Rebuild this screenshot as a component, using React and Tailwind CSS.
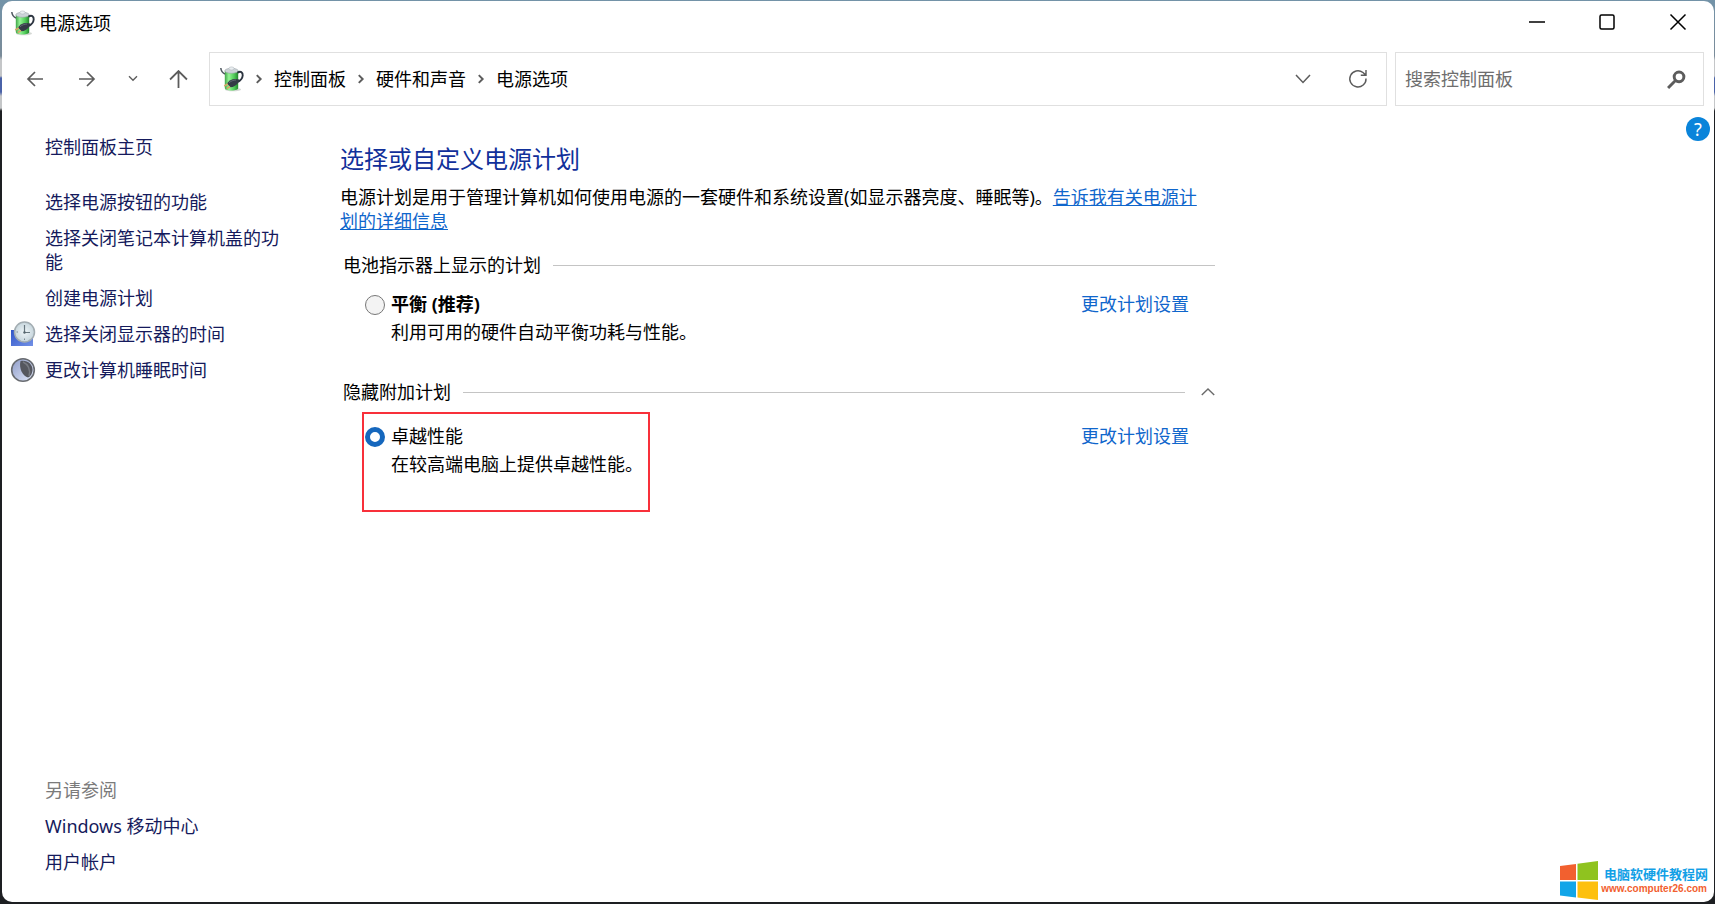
import React, { useState } from 'react';

const sideLinks = [
  { label: '选择电源按钮的功能' },
  { label: '选择关闭笔记本计算机盖的功能' },
  { label: '创建电源计划' },
  { label: '选择关闭显示器的时间', icon: ClockIcon },
  { label: '更改计算机睡眠时间', icon: MoonIcon },
];

const crumbs = ['控制面板', '硬件和声音', '电源选项'];

function BatteryIcon() {
  return (
    <svg width="24" height="26" viewBox="0 0 24 26" aria-hidden="true">
      <defs>
        <linearGradient id="cell" x1="0" x2="1" y1="0" y2="0">
          <stop offset="0" stopColor="#3fa548" />
          <stop offset="0.3" stopColor="#96f596" />
          <stop offset="0.7" stopColor="#4fcb57" />
          <stop offset="1" stopColor="#25852f" />
        </linearGradient>
      </defs>
      <ellipse cx="13" cy="23.500" rx="8" ry="1.800" fill="#d4d8d4" />
      <path d="M4.800 5v17c0 1.500 2.500 2.500 6.700 2.500s6.700-1 6.700-2.500V5z" fill="url(#cell)" />
      <ellipse cx="11.500" cy="4.800" rx="6.700" ry="2.500" fill="#cdd3d8" stroke="#9aa3a8" strokeWidth="0.600" />
      <ellipse cx="11.500" cy="2.500" rx="2.600" ry="1.600" fill="#e9edf0" stroke="#a9b0b5" strokeWidth="0.500" />
      <path d="M0.800 2c0.300 3.500 1.800 5 4.200 6" fill="none" stroke="#4d565e" strokeWidth="1.500" />
      <path d="M17.500 6.800c3-2.300 5.500-0.500 5.200 2.700-0.300 3-2 5-4.700 6.500" fill="none" stroke="#2c3440" strokeWidth="1.900" />
      <path d="M7 17.500c1.500-2.500 5-4.500 8-4.500l4.500.5-1.500 3.500c-2 2.500-4.500 4.300-7.500 4.300z" fill="#343a46" />
      <path d="M9 16.800c2-1.800 4.500-2.800 7-2.800" fill="none" stroke="#6d7482" strokeWidth="0.800" />
      <path d="M7.800 18l-3.600 2M10 20.500l-3.200 2" stroke="#d9a566" strokeWidth="1.500" />
    </svg>
  );
}

function ClockIcon() {
  return (
    <svg width="26" height="26" viewBox="0 0 26 26" aria-hidden="true">
      <defs>
        <linearGradient id="screen" x1="0" x2="1" y1="0" y2="1">
          <stop offset="0" stopColor="#2f55c8" />
          <stop offset="1" stopColor="#7391e6" />
        </linearGradient>
        <radialGradient id="dial">
          <stop offset="0" stopColor="#eef5f8" />
          <stop offset="1" stopColor="#c6d5dc" />
        </radialGradient>
      </defs>
      <path d="M1 9h22v16H1z" fill="url(#screen)" />
      <circle cx="14.500" cy="11" r="10" fill="url(#dial)" stroke="#a3adb2" strokeWidth="1.500" />
      <path d="M14.500 4v7.500H20" fill="none" stroke="#66767e" strokeWidth="1.200" />
      <path d="M14.500 17.500v1.500M6.500 11H8" stroke="#7d8b92" strokeWidth="1" />
      <circle cx="14.500" cy="11.500" r="1.200" fill="#56666e" />
    </svg>
  );
}

function MoonIcon() {
  return (
    <svg width="26" height="26" viewBox="0 0 26 26" aria-hidden="true">
      <defs>
        <linearGradient id="moon" x1="0" x2="1" y1="0" y2="1">
          <stop offset="0" stopColor="#8f9cc8" />
          <stop offset="1" stopColor="#e2e9fb" />
        </linearGradient>
      </defs>
      <circle cx="13" cy="13" r="11.300" fill="url(#moon)" stroke="#686b70" strokeWidth="1.600" />
      <path d="M10.500 4c6.500-1.500 12 3 12 8.500 0 4-2 7-4.500 8-5-1-9.500-9-7.500-16.500z" fill="#55575f" />
      <path d="M13 5c5 2 8 8 6 14" fill="none" stroke="#777a82" strokeWidth="1.500" />
    </svg>
  );
}

function Icon({ d, size = 18, width = 1.5 }) {
  return (
    <svg width={size} height={size} viewBox="0 0 18 18" fill="none" stroke="currentColor" strokeWidth={width} aria-hidden="true">
      <path d={d} />
    </svg>
  );
}

function TitleBar() {
  return (
    <header className="flex h-[51px] items-start justify-between pt-px pl-[9px]">
      <div className="flex items-center gap-1 pt-2">
        <BatteryIcon />
        <span>电源选项</span>
      </div>
      <div className="flex h-10 text-black">
        <button aria-label="最小化" className="flex w-[70px] items-center justify-center">
          <Icon d="M1 9h16" />
        </button>
        <button aria-label="最大化" className="flex w-[70px] items-center justify-center">
          <svg width="18" height="18" viewBox="0 0 18 18" fill="none" stroke="currentColor" strokeWidth="1.5" aria-hidden="true">
            <rect x="2" y="2" width="14" height="14" rx="1.500" />
          </svg>
        </button>
        <button aria-label="关闭" className="flex w-[72px] items-center justify-center">
          <Icon d="M1.500 1.500l15 15M16.500 1.500l-15 15" />
        </button>
      </div>
    </header>
  );
}

function NavBar() {
  return (
    <div className="flex h-[54px] items-stretch pr-[10px] text-[#5c5c5c]">
      <nav className="flex w-[207px] shrink-0 items-center pl-6">
        <button aria-label="后退" className="mr-[34px]"><Icon d="M17 9H1.500M9 2L2 9l7 7" width={1.700} /></button>
        <button aria-label="前进" className="mr-[31px]"><Icon d="M1 9h15.500M9 2l7 7-7 7" width={1.700} /></button>
        <button aria-label="最近位置" className="mr-[30px]"><Icon size={12} width={2} d="M3 5l6 6 6-6" /></button>
        <button aria-label="上移"><Icon size={19} d="M9 17V1.500M1 9l8-8 8 8" width={1.700} /></button>
      </nav>
      <div className="mr-2 flex flex-1 items-center border border-[#e0e0e0] pl-[10px] pr-[18px]">
        <BatteryIcon />
        <ol className="flex flex-1 items-center text-black">
          {crumbs.map((crumb) => (
            <li key={crumb} className="flex items-center">
              <span className="flex w-[30px] justify-center text-[#5c5c5c]">
                <Icon size={10} width={3.5} d="M5 2l7 7-7 7" />
              </span>
              <a href="#">{crumb}</a>
            </li>
          ))}
        </ol>
        <button aria-label="展开地址" className="mr-9"><Icon size={18} d="M2 5l7 7.500L16 5" /></button>
        <button aria-label="刷新">
          <Icon size={20} d="M16.200 8.500A7.300 7.300 0 1 1 13.500 3.200l2.500 2.300M16.200 1v4.700h-4.700" width={1.300} />
        </button>
      </div>
      <form className="flex w-[309px] items-center border border-[#e0e0e0] pl-[9px] pr-[17px]" onSubmit={(e) => e.preventDefault()}>
        <input
          type="text"
          aria-label="搜索控制面板"
          placeholder="搜索控制面板"
          className="min-w-0 flex-1 bg-transparent text-black outline-none placeholder:text-[#6e6e6e]"
        />
        <button aria-label="搜索"><Icon size={19} width={2.8} d="M16 6.500a4.600 4.600 0 1 1-9.200 0 4.600 4.600 0 0 1 9.200 0zM8 10l-7 7" /></button>
      </form>
    </div>
  );
}

function Sidebar() {
  return (
    <aside className="flex w-[338px] shrink-0 flex-col pr-[49px] pb-7 pl-2 text-[#151a5c]">
      <a href="#" className="mt-[29px] mb-[31px] ml-[35px]">控制面板主页</a>
      <ul className="flex flex-col gap-3">
        {sideLinks.map(({ label, icon: SideIcon }) => (
          <li key={label} className="flex">
            <span className="flex h-6 w-[35px] shrink-0 items-center">{SideIcon && <SideIcon />}</span>
            <a href="#">{label}</a>
          </li>
        ))}
      </ul>
      <div className="mt-auto ml-[35px] flex flex-col gap-3">
        <h2 className="text-[#7b7b7b]">另请参阅</h2>
        <a href="#">Windows 移动中心</a>
        <a href="#">用户帐户</a>
      </div>
    </aside>
  );
}

function Plan({ id, name, note, bold, checked, onSelect }) {
  return (
    <div className="flex">
      <input
        type="radio"
        name="plan"
        id={id}
        checked={checked}
        onChange={onSelect}
        className="mt-[3px] mr-[6px] size-5 shrink-0 appearance-none rounded-full border border-[#777] bg-[#f3f3f3] checked:border-[5px] checked:border-[#1567bd] checked:bg-white"
      />
      <div>
        <label htmlFor={id} className={bold ? 'block font-bold' : 'block'}>{name}</label>
        <p className="mt-1">{note}</p>
      </div>
    </div>
  );
}

function SiteMark() {
  return (
    <div className="absolute right-[6px] bottom-px flex items-center gap-[3px]">
      <svg width="38" height="40" viewBox="0 0 38 40" aria-hidden="true">
        <path d="M0 5l16-2v16H0z" fill="#f2602f" />
        <path d="M17.500 2.800L38 0v19H17.500z" fill="#8fc31f" />
        <path d="M0 20.500h16v16L0 34.500z" fill="#12a5e8" />
        <path d="M17.500 20.500H38V39l-20.500-2.500z" fill="#fdc00f" />
      </svg>
      <div className="flex flex-col items-end">
        <span className="text-[13px] leading-4 font-bold text-[#12a0e6]">电脑软硬件教程网</span>
        <span className="pr-px font-['Liberation_Sans',sans-serif] text-[10px] leading-[14px] font-bold text-[#f2602f]">www.computer26.com</span>
      </div>
    </div>
  );
}

function App() {
  const [plan, setPlan] = useState('ultimate');

  return (
    <div className="flex min-h-screen bg-[linear-gradient(#7393a8_0,#7a8b99_56px,#c4c6c8_60px,#c4c6c8_76px,#4a62a8_78px,#4a62a8_92px,#c4c6c8_96px,#c4c6c8_108px,#1d1f22_111px)] pt-px pr-px pb-[2px] pl-[2px] font-['Noto_Sans','Noto_Sans_CJK_SC',sans-serif] text-[18px] leading-6 text-black">
      <div className="relative flex flex-1 flex-col rounded-[10px] bg-white">
        <TitleBar />
        <NavBar />
        <div className="flex flex-1">
          <Sidebar />
          <main className="max-w-[875px] flex-1">
            <h1 className="mt-[37px] text-[24px] leading-8 text-[#11309a]">选择或自定义电源计划</h1>
            <p className="mt-[10px] pr-2">
              电源计划是用于管理计算机如何使用电源的一套硬件和系统设置(如显示器亮度、睡眠等)。
              <a href="#" className="text-[#0f66cc] underline">告诉我有关电源计划的详细信息</a>
            </p>

            <section className="mt-5">
              <div className="flex items-center gap-3 pl-[3px]">
                <h2>电池指示器上显示的计划</h2>
                <span className="h-px flex-1 bg-[#c4c4c4]" />
              </div>
              <div className="mt-[15px] flex items-start justify-between pr-[26px] pl-[25px]">
                <Plan
                  id="balanced"
                  name="平衡 (推荐)"
                  note="利用可用的硬件自动平衡功耗与性能。"
                  bold
                  checked={plan === 'balanced'}
                  onSelect={() => setPlan('balanced')}
                />
                <a href="#" className="text-[#0f66cc]">更改计划设置</a>
              </div>
            </section>

            <section className="mt-9">
              <div className="flex items-center gap-3 pl-[3px]">
                <h2>隐藏附加计划</h2>
                <span className="h-px flex-1 bg-[#c4c4c4]" />
                <button aria-label="隐藏附加计划" className="ml-1 text-[#6a6a6a]">
                  <Icon size={14} d="M1 13l8-8 8 8" width={1.800} />
                </button>
              </div>
              <div className="mt-2 flex items-start justify-between pr-[26px] pl-[22px]">
                <div className="h-[100px] w-[288px] border-2 border-[#f8303a] pt-[10px] pl-px">
                  <Plan
                    id="ultimate"
                    name="卓越性能"
                    note="在较高端电脑上提供卓越性能。"
                    checked={plan === 'ultimate'}
                    onSelect={() => setPlan('ultimate')}
                  />
                </div>
                <a href="#" className="mt-3 text-[#0f66cc]">更改计划设置</a>
              </div>
            </section>
          </main>
          <div className="ml-auto pt-[11px] pr-1">
            <button aria-label="帮助" className="flex size-6 items-center justify-center rounded-full bg-[#0a84da] text-[18px] text-white">?</button>
          </div>
        </div>
        <SiteMark />
      </div>
    </div>
  );
}

export default App;
